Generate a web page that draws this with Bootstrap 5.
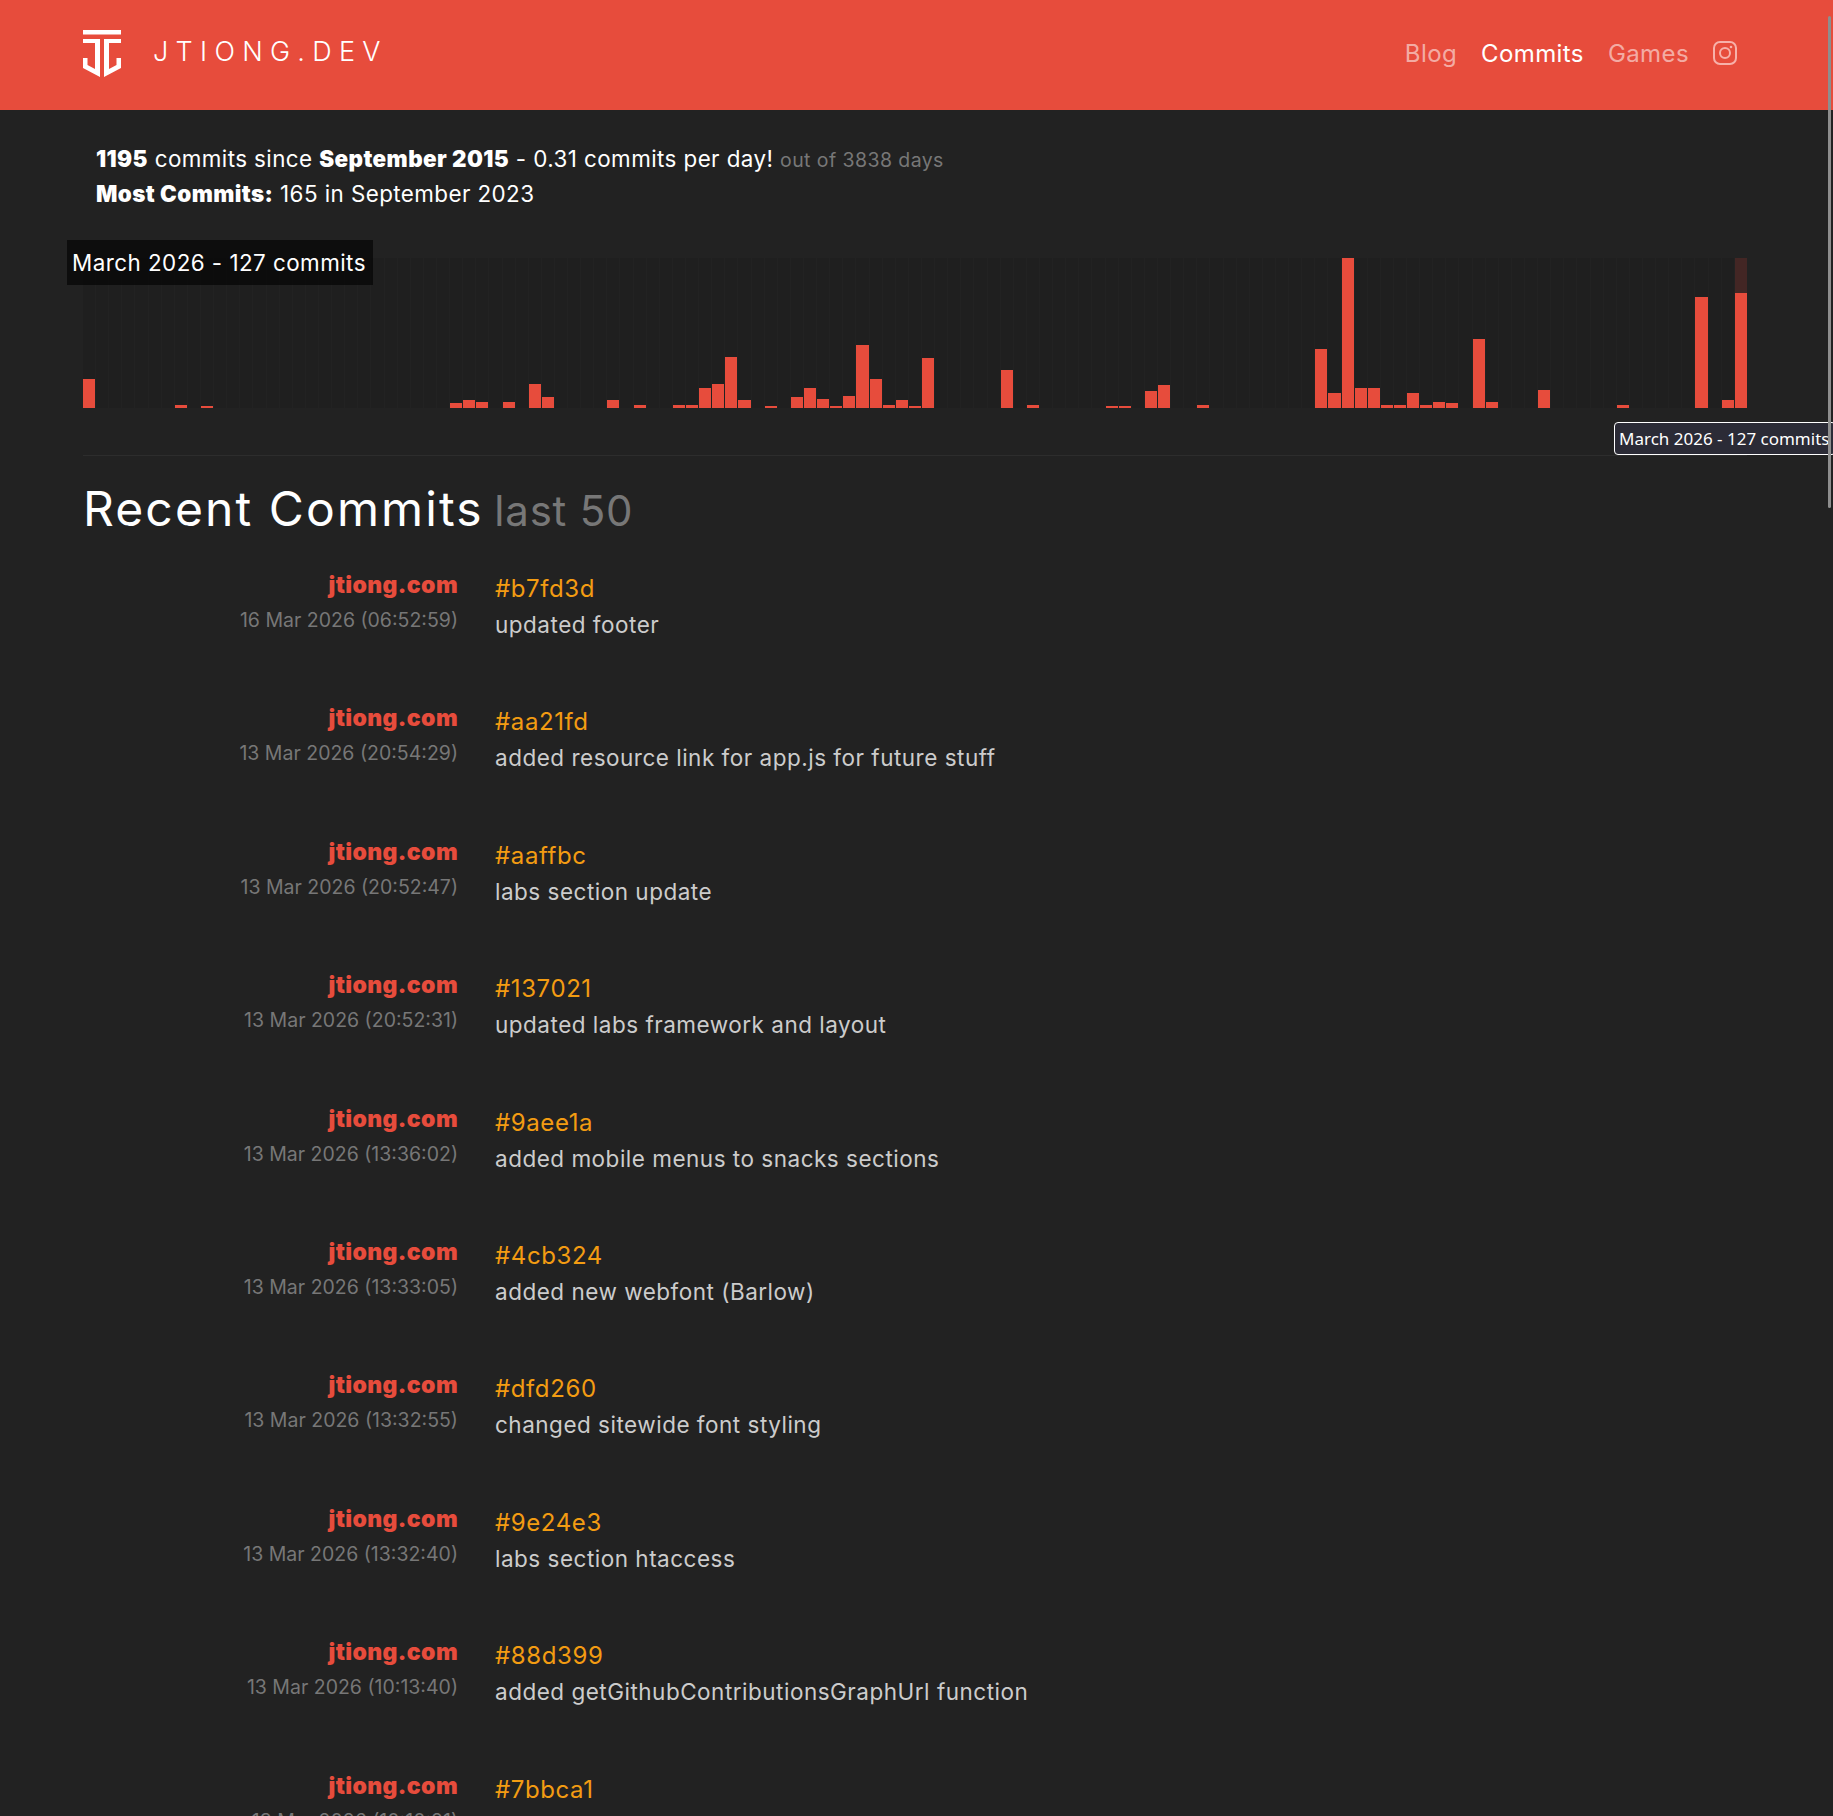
<!DOCTYPE html>
<html lang="en">
<head>
<meta charset="utf-8">
<title>Commits - jtiong.dev</title>
<link rel="stylesheet" href="https://cdn.jsdelivr.net/npm/bootstrap@5.3.0/dist/css/bootstrap.min.css">
<style>
html,body{height:1816px;overflow:hidden}
body{background:#222;color:#fff;font-family:Inter,"Noto Sans",sans-serif;position:relative}
.site-bar{background:#e74c3c;height:110px;padding:0 83px;align-items:flex-start}
.brand-mark{width:38px;height:48px;margin-top:30px;display:block}
.brand-name{margin:35px 0 0 32px;font-size:27px;font-weight:300;letter-spacing:.27em;color:#fff;line-height:34px}
.site-links{margin:36px 0 0 0;padding-right:13px;gap:24px;font-size:24px;letter-spacing:.4px;line-height:36px}
.site-links a{color:rgba(255,255,255,.55);text-decoration:none}
.site-links a.on{color:#fff}
.site-links svg{display:block;margin-top:5px}
.stats{padding:32px 0 0 96px;font-size:22.4px;letter-spacing:.42px;line-height:34px;height:130px}
.stats b{font-weight:900}
.stats small{font-size:19.5px;color:#777}
.chart-wrap{margin:18px 86px 0 83px;position:relative;height:150px}
.month-col{flex:1 1 0;margin-right:1px;background:#1f1f1f;position:relative;display:flex;align-items:flex-end}
.month-col.hot{background:#432624}
.month-fill{background:#e74c3c;width:100%}
.tip-dark{position:absolute;left:-16px;top:-18px;background:rgba(0,0,0,.6);padding:0 5px;line-height:45px;height:45px;font-size:22.4px;letter-spacing:.46px;color:#fff;white-space:nowrap;width:306px}
.tip-native{position:absolute;top:422px;left:1614px;width:222px;height:33px;background:#2b2b36;border:1px solid #fff;border-radius:4px;padding:0 4px;font:17px/31px "Noto Sans",sans-serif;color:#fff;white-space:nowrap}
.rule{margin:47px 86px 0 83px;border:0;border-top:1px solid #2d2d2d;opacity:1}
.heading{margin:23px 0 0 83px;font-size:48px;letter-spacing:2.1px;font-weight:400;line-height:60px;color:#fff}
.heading small{font-size:42px;letter-spacing:.8px;color:#777;margin-left:-5px}
.entries{margin:27px 0 0 83px}
.entry{height:133.4px}
.entry-side{width:375px;text-align:right}
.entry-main{margin-left:37px}
.repo{color:#e74c3c;font-weight:900;font-size:23px;letter-spacing:.4px;line-height:35px}
.when{color:#777;font-size:19.5px;line-height:35px}
.hash{color:#f39c12;font-size:24px;letter-spacing:.6px;line-height:36px;margin-top:3px}
.msg{color:#ccc;font-size:22.5px;letter-spacing:.5px;line-height:36px}
.track{position:absolute;left:1828px;top:16px;width:3px;height:492px;background:#8e8e8e;border-radius:2px}
</style>
</head>
<body>
<header class="site-bar d-flex justify-content-between">
<a href="#" class="d-flex text-decoration-none">
<svg class="brand-mark" viewBox="0 0 38 48" fill="#fff"><path d="M0 0H38V4.5H0Z"/><path d="M0 9H17V47L0 38V28H4.5V35L12 39V13H0Z"/><path d="M38 9H21V47L38 38V28H33.5V35L26 39V13H38Z"/></svg>
<span class="brand-name">JTIONG.DEV</span>
</a>
<nav class="site-links d-flex">
<a href="#">Blog</a>
<a href="#" class="on">Commits</a>
<a href="#">Games</a>
<a href="#"><svg width="24" height="24" viewBox="0 0 24 24" fill="none" stroke="#f7b1aa" stroke-width="2"><rect x="1" y="1" width="22" height="22" rx="6"/><circle cx="12" cy="12" r="5"/><circle cx="18" cy="6" r="1.3" fill="#f7b1aa" stroke="none"/></svg></a>
</nav>
</header>
<main>
<section class="stats">
<b>1195</b> commits since <b>September 2015</b> - 0.31 commits per day! <small>out of 3838 days</small><br>
<b>Most Commits:</b> 165 in September 2023
</section>
<div class="chart-wrap d-flex">
<div class="month-col"><div class="month-fill" style="height:29px"></div></div>
<div class="month-col"></div><div class="month-col"></div><div class="month-col"></div><div class="month-col"></div><div class="month-col"></div><div class="month-col"></div>
<div class="month-col"><div class="month-fill" style="height:3px"></div></div>
<div class="month-col"></div>
<div class="month-col"><div class="month-fill" style="height:2px"></div></div>
<div class="month-col"></div><div class="month-col"></div><div class="month-col"></div><div class="month-col"></div><div class="month-col"></div><div class="month-col"></div><div class="month-col"></div><div class="month-col"></div><div class="month-col"></div><div class="month-col"></div><div class="month-col"></div><div class="month-col"></div><div class="month-col"></div><div class="month-col"></div><div class="month-col"></div><div class="month-col"></div><div class="month-col"></div><div class="month-col"></div>
<div class="month-col"><div class="month-fill" style="height:5px"></div></div>
<div class="month-col"><div class="month-fill" style="height:8px"></div></div>
<div class="month-col"><div class="month-fill" style="height:6px"></div></div>
<div class="month-col"></div>
<div class="month-col"><div class="month-fill" style="height:6px"></div></div>
<div class="month-col"></div>
<div class="month-col"><div class="month-fill" style="height:24px"></div></div>
<div class="month-col"><div class="month-fill" style="height:11px"></div></div>
<div class="month-col"></div><div class="month-col"></div><div class="month-col"></div><div class="month-col"></div>
<div class="month-col"><div class="month-fill" style="height:8px"></div></div>
<div class="month-col"></div>
<div class="month-col"><div class="month-fill" style="height:3px"></div></div>
<div class="month-col"></div><div class="month-col"></div>
<div class="month-col"><div class="month-fill" style="height:3px"></div></div>
<div class="month-col"><div class="month-fill" style="height:3px"></div></div>
<div class="month-col"><div class="month-fill" style="height:20px"></div></div>
<div class="month-col"><div class="month-fill" style="height:24px"></div></div>
<div class="month-col"><div class="month-fill" style="height:51px"></div></div>
<div class="month-col"><div class="month-fill" style="height:8px"></div></div>
<div class="month-col"></div>
<div class="month-col"><div class="month-fill" style="height:2px"></div></div>
<div class="month-col"></div>
<div class="month-col"><div class="month-fill" style="height:11px"></div></div>
<div class="month-col"><div class="month-fill" style="height:20px"></div></div>
<div class="month-col"><div class="month-fill" style="height:9px"></div></div>
<div class="month-col"><div class="month-fill" style="height:2px"></div></div>
<div class="month-col"><div class="month-fill" style="height:12px"></div></div>
<div class="month-col"><div class="month-fill" style="height:63px"></div></div>
<div class="month-col"><div class="month-fill" style="height:29px"></div></div>
<div class="month-col"><div class="month-fill" style="height:3px"></div></div>
<div class="month-col"><div class="month-fill" style="height:8px"></div></div>
<div class="month-col"><div class="month-fill" style="height:2px"></div></div>
<div class="month-col"><div class="month-fill" style="height:50px"></div></div>
<div class="month-col"></div><div class="month-col"></div><div class="month-col"></div><div class="month-col"></div><div class="month-col"></div>
<div class="month-col"><div class="month-fill" style="height:38px"></div></div>
<div class="month-col"></div>
<div class="month-col"><div class="month-fill" style="height:3px"></div></div>
<div class="month-col"></div><div class="month-col"></div><div class="month-col"></div><div class="month-col"></div><div class="month-col"></div>
<div class="month-col"><div class="month-fill" style="height:2px"></div></div>
<div class="month-col"><div class="month-fill" style="height:2px"></div></div>
<div class="month-col"></div>
<div class="month-col"><div class="month-fill" style="height:17px"></div></div>
<div class="month-col"><div class="month-fill" style="height:23px"></div></div>
<div class="month-col"></div><div class="month-col"></div>
<div class="month-col"><div class="month-fill" style="height:3px"></div></div>
<div class="month-col"></div><div class="month-col"></div><div class="month-col"></div><div class="month-col"></div><div class="month-col"></div><div class="month-col"></div><div class="month-col"></div><div class="month-col"></div>
<div class="month-col"><div class="month-fill" style="height:59px"></div></div>
<div class="month-col"><div class="month-fill" style="height:15px"></div></div>
<div class="month-col"><div class="month-fill" style="height:150px"></div></div>
<div class="month-col"><div class="month-fill" style="height:20px"></div></div>
<div class="month-col"><div class="month-fill" style="height:20px"></div></div>
<div class="month-col"><div class="month-fill" style="height:3px"></div></div>
<div class="month-col"><div class="month-fill" style="height:3px"></div></div>
<div class="month-col"><div class="month-fill" style="height:15px"></div></div>
<div class="month-col"><div class="month-fill" style="height:3px"></div></div>
<div class="month-col"><div class="month-fill" style="height:6px"></div></div>
<div class="month-col"><div class="month-fill" style="height:5px"></div></div>
<div class="month-col"></div>
<div class="month-col"><div class="month-fill" style="height:69px"></div></div>
<div class="month-col"><div class="month-fill" style="height:6px"></div></div>
<div class="month-col"></div><div class="month-col"></div><div class="month-col"></div>
<div class="month-col"><div class="month-fill" style="height:18px"></div></div>
<div class="month-col"></div><div class="month-col"></div><div class="month-col"></div><div class="month-col"></div><div class="month-col"></div>
<div class="month-col"><div class="month-fill" style="height:3px"></div></div>
<div class="month-col"></div><div class="month-col"></div><div class="month-col"></div><div class="month-col"></div><div class="month-col"></div>
<div class="month-col"><div class="month-fill" style="height:111px"></div></div>
<div class="month-col"></div>
<div class="month-col"><div class="month-fill" style="height:8px"></div></div>
<div class="month-col hot"><div class="month-fill" style="height:115px"></div></div>
<div class="tip-dark">March 2026 - 127 commits</div>
</div>
<hr class="rule">
<h1 class="heading">Recent Commits <small>last 50</small></h1>
<div class="entries">
<div class="entry d-flex"><div class="entry-side"><div class="repo">jtiong.com</div><div class="when">16 Mar 2026 (06:52:59)</div></div><div class="entry-main"><div class="hash">#b7fd3d</div><div class="msg">updated footer</div></div></div>
<div class="entry d-flex"><div class="entry-side"><div class="repo">jtiong.com</div><div class="when">13 Mar 2026 (20:54:29)</div></div><div class="entry-main"><div class="hash">#aa21fd</div><div class="msg">added resource link for app.js for future stuff</div></div></div>
<div class="entry d-flex"><div class="entry-side"><div class="repo">jtiong.com</div><div class="when">13 Mar 2026 (20:52:47)</div></div><div class="entry-main"><div class="hash">#aaffbc</div><div class="msg">labs section update</div></div></div>
<div class="entry d-flex"><div class="entry-side"><div class="repo">jtiong.com</div><div class="when">13 Mar 2026 (20:52:31)</div></div><div class="entry-main"><div class="hash">#137021</div><div class="msg">updated labs framework and layout</div></div></div>
<div class="entry d-flex"><div class="entry-side"><div class="repo">jtiong.com</div><div class="when">13 Mar 2026 (13:36:02)</div></div><div class="entry-main"><div class="hash">#9aee1a</div><div class="msg">added mobile menus to snacks sections</div></div></div>
<div class="entry d-flex"><div class="entry-side"><div class="repo">jtiong.com</div><div class="when">13 Mar 2026 (13:33:05)</div></div><div class="entry-main"><div class="hash">#4cb324</div><div class="msg">added new webfont (Barlow)</div></div></div>
<div class="entry d-flex"><div class="entry-side"><div class="repo">jtiong.com</div><div class="when">13 Mar 2026 (13:32:55)</div></div><div class="entry-main"><div class="hash">#dfd260</div><div class="msg">changed sitewide font styling</div></div></div>
<div class="entry d-flex"><div class="entry-side"><div class="repo">jtiong.com</div><div class="when">13 Mar 2026 (13:32:40)</div></div><div class="entry-main"><div class="hash">#9e24e3</div><div class="msg">labs section htaccess</div></div></div>
<div class="entry d-flex"><div class="entry-side"><div class="repo">jtiong.com</div><div class="when">13 Mar 2026 (10:13:40)</div></div><div class="entry-main"><div class="hash">#88d399</div><div class="msg">added getGithubContributionsGraphUrl function</div></div></div>
<div class="entry d-flex"><div class="entry-side"><div class="repo">jtiong.com</div><div class="when">13 Mar 2026 (10:10:21)</div></div><div class="entry-main"><div class="hash">#7bbca1</div><div class="msg">labs section</div></div></div>
</div>
</main>
<div class="tip-native">March 2026 - 127 commits</div>
<div class="track"></div>
<script src="https://cdn.jsdelivr.net/npm/bootstrap@5.3.0/dist/js/bootstrap.bundle.min.js"></script>
</body>
</html>
